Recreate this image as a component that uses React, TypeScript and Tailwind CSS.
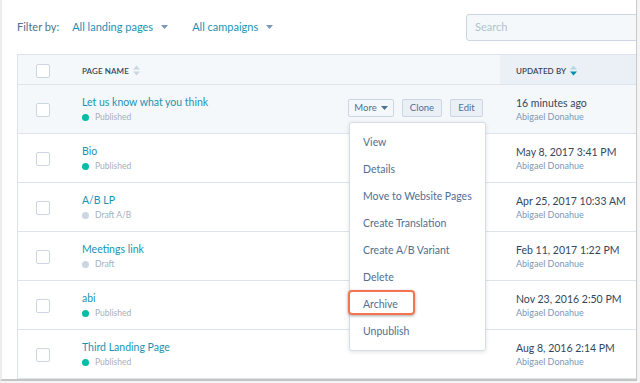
import React from "react";

const font = { fontFamily: "Lato, 'Open Sans', sans-serif" };

function Caret({ color = "#7c98b6" }: { color?: string }) {
  return (
    <svg width="7" height="4" viewBox="0 0 7 4" className="inline-block">
      <path d="M0 0 L7 0 L3.5 4 Z" fill={color} />
    </svg>
  );
}

function SortIcon({ active = false }: { active?: boolean }) {
  return (
    <svg width="7" height="11" viewBox="0 0 7 11" className="inline-block">
      <path d="M0 4.5 L3.5 0.5 L7 4.5 Z" fill={active ? "#b5d9e6" : "#cbd6e2"} />
      <path d="M0 6.5 L3.5 10.5 L7 6.5 Z" fill={active ? "#0091ae" : "#cbd6e2"} />
    </svg>
  );
}

function Checkbox() {
  return <div className="w-[14px] h-[14px] border border-[#cbd6e2] rounded-[2px] bg-white" />;
}

type Row = { title: string; status: string; published: boolean; date: string; hover?: boolean };

const rows: Row[] = [
  { title: "Let us know what you think", status: "Published", published: true, date: "16 minutes ago", hover: true },
  { title: "Bio", status: "Published", published: true, date: "May 8, 2017 3:41 PM" },
  { title: "A/B LP", status: "Draft A/B", published: false, date: "Apr 25, 2017 10:33 AM" },
  { title: "Meetings link", status: "Draft", published: false, date: "Feb 11, 2017 1:22 PM" },
  { title: "abi", status: "Published", published: true, date: "Nov 23, 2016 2:50 PM" },
  { title: "Third Landing Page", status: "Published", published: true, date: "Aug 8, 2016 2:14 PM" },
];

const menu = [
  "View",
  "Details",
  "Move to Website Pages",
  "Create Translation",
  "Create A/B Variant",
  "Delete",
  "Archive",
  "Unpublish",
];

export default function App() {
  return (
    <div className="w-[640px] h-[383px] bg-[#f4f4f4] relative overflow-hidden" style={font}>
      <div className="w-[637px] h-[381px] bg-white border-l-[2px] border-l-[#ececec] border-r border-r-[#c9c9c9] border-b-[2px] border-b-[#c4c4c4] overflow-hidden flex flex-col">
        {/* filter bar */}
        <div className="h-[54px] shrink-0 flex items-center pl-[15px]">
          <span className="text-[11px] text-[#516f90] mr-[13px]">Filter by:</span>
          <span className="text-[11px] text-[#1a93b3] mr-[8px]">All landing pages</span>
          <Caret color="#7c98b6" />
          <span className="text-[11px] text-[#1a93b3] ml-[24px] mr-[8px]">All campaigns</span>
          <Caret color="#7c98b6" />
          <div className="ml-auto h-[27px] w-[172px] mr-[-2px] bg-[#f5f8fa] border border-[#cbd6e2] rounded-[3px] flex items-center pl-[8px]">
            <span className="text-[11px] text-[#b0c1d4]">Search</span>
          </div>
        </div>
        {/* table */}
        <div className="ml-[15px] border-l border-t border-[#dfe3eb] flex-1 flex flex-col">
          <div className="h-[30px] shrink-0 flex bg-[#f5f8fa] border-b border-[#dfe3eb]">
            <div className="w-[64px] flex items-center pl-[18px] pt-[3px]">
              <Checkbox />
            </div>
            <div className="w-[418px] flex items-center gap-[4px] pt-[2px]">
              <span className="text-[8px] font-semibold text-[#33475b] tracking-[0.1px]">PAGE NAME</span>
              <SortIcon />
            </div>
            <div className="flex-1 bg-[#eaf0f6] flex items-center gap-[4px] pl-[16px] pt-[2px]">
              <span className="text-[8px] font-semibold text-[#33475b] tracking-[0.1px]">UPDATED BY</span>
              <SortIcon active />
            </div>
          </div>
          {rows.map((r, i) => (
            <div
              key={i}
              className={`h-[49px] shrink-0 flex border-b border-[#dfe3eb] ${r.hover ? "bg-[#f5f8fa]" : "bg-white"}`}
            >
              <div className="w-[64px] flex items-center pl-[18px] pt-[2px]">
                <Checkbox />
              </div>
              <div className="w-[418px] flex items-center">
                <div className="flex flex-col pt-[1px]">
                  <span className="text-[10.5px] leading-[14px] text-[#1a93b3]">{r.title}</span>
                  <span className="flex items-center gap-[6px] mt-[2px]">
                    <span className={`w-[7px] h-[7px] rounded-full ${r.published ? "bg-[#00bda5]" : "bg-[#cbd6e2]"}`} />
                    <span className="text-[8.5px] text-[#a3b1bf]">{r.status}</span>
                  </span>
                </div>
                {r.hover && (
                  <div className="ml-auto mr-[17px] flex gap-[8px] mt-[-2px]">
                    <div className="h-[18px] w-[46px] flex items-center justify-center gap-[4px] bg-[#f5f8fa] border border-[#cbd6e2] rounded-[2px] text-[9.5px] text-[#516f90]">
                      More <Caret color="#516f90" />
                    </div>
                    <div className="h-[18px] w-[40px] flex items-center justify-center bg-[#eaf0f6] border border-[#cbd6e2] rounded-[2px] text-[9.5px] text-[#516f90]">
                      Clone
                    </div>
                    <div className="h-[18px] w-[33px] flex items-center justify-center bg-[#eaf0f6] border border-[#cbd6e2] rounded-[2px] text-[9.5px] text-[#516f90]">
                      Edit
                    </div>
                  </div>
                )}
              </div>
              <div className="flex-1 flex flex-col justify-center pl-[16px] pt-[1px]">
                <span className="text-[10.5px] leading-[13px] text-[#33475b]">{r.date}</span>
                <span className="text-[9px] leading-[12px] text-[#7c98b6] mt-[1px]">Abigael Donahue</span>
              </div>
            </div>
          ))}
        </div>
      </div>
      {/* dropdown menu */}
      <div className="absolute left-[349px] top-[122px] w-[137px] h-[229px] bg-white border border-[#d6dde6] rounded-[3px] shadow-[0_1px_4px_rgba(0,0,0,0.12)] flex flex-col pt-[6px]">
        {menu.map((m) => (
          <div key={m} className="h-[27px] shrink-0 flex items-center pl-[13px] text-[10.5px] text-[#516f90]">
            {m === "Archive" ? (
              <div className="relative">
                <span>{m}</span>
                <div className="absolute left-[-15px] top-[-7px] w-[67px] h-[25px] border-[2.5px] border-[#f2754f] rounded-[4px] shadow-[0_1px_3px_rgba(0,0,0,0.35)]" />
              </div>
            ) : (
              m
            )}
          </div>
        ))}
      </div>
    </div>
  );
}
